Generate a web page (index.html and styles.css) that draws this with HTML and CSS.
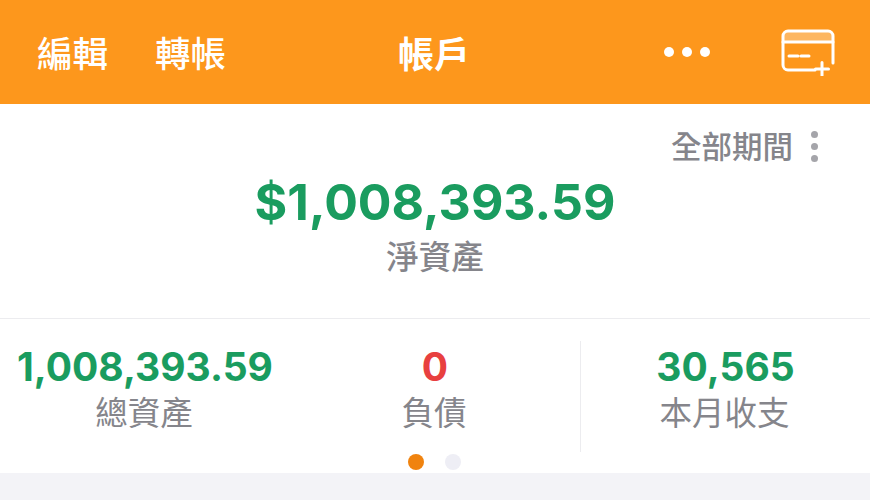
FILE: index.html
```html
<!DOCTYPE html>
<html lang="zh-Hant">
<head>
  <meta charset="UTF-8" />
  <title>帳戶</title>
  <link rel="stylesheet" href="styles.css">
</head>
<body>
  <header class="topbar">
    <div class="topbar-left">
      <span>編輯</span>
      <span>轉帳</span>
    </div>
    <div class="topbar-title">帳戶</div>
    <div class="topbar-right">
      <div class="more-dots"><i></i><i></i><i></i></div>
      <svg class="card-icon" width="54" height="48" viewBox="0 0 54 48" fill="none" stroke="#fff" stroke-width="3" stroke-linecap="round">
        <path d="M2 14V8a5 5 0 0 1 5-5h40a5 5 0 0 1 5 5v6z" fill="#fff" fill-opacity="0.3" stroke="none"/>
        <path d="M34 42H7a5 5 0 0 1-5-5V8a5 5 0 0 1 5-5h40a5 5 0 0 1 5 5v27"/>
        <path d="M2 14h50"/>
        <path d="M8 28h9M20 28h8"/>
        <path d="M41 34.500v13M34.500 41h13"/>
      </svg>
    </div>
  </header>

  <section class="summary">
    <div class="period">
      <span>全部期間</span>
      <div class="kebab"><i></i><i></i><i></i></div>
    </div>
    <div class="net-value">$1,008,393.59</div>
    <div class="net-label">淨資產</div>
  </section>

  <section class="stats">
    <div class="stat">
      <div class="stat-value green">1,008,393.59</div>
      <div class="stat-label">總資產</div>
    </div>
    <div class="stat">
      <div class="stat-value red">0</div>
      <div class="stat-label">負債</div>
    </div>
    <div class="stat stat-last">
      <div class="stat-value green">30,565</div>
      <div class="stat-label">本月收支</div>
    </div>
  </section>

  <div class="pager"><i class="on"></i><i></i></div>
  <div class="footer-band"></div>
</body>
</html>
```

FILE: styles.css
```css
:root {
  --orange: #fd971c;
  --green: #1a9c5f;
  --red: #e8403f;
  --grey: #85858b;
}

* {
  box-sizing: border-box;
}

html, body {
  height: 100%;
}

body {
  margin: 0;
  background: #fff;
  display: flex;
  flex-direction: column;
  overflow: hidden;
  font-family: "Noto Sans CJK TC", "Inter", sans-serif;
}

.topbar {
  height: 104px;
  flex: none;
  background: var(--orange);
  color: #fff;
  display: grid;
  grid-template-columns: 1fr auto 1fr;
  align-items: center;
  padding: 0 35px 0 37px;
  font-size: 35.500px;
  font-weight: 500;
  line-height: 1;
}

.topbar-left {
  display: flex;
  gap: 47px;
}

.topbar-title {
  font-size: 36px;
  font-weight: 700;
  margin-left: -4px;
}

.topbar-right {
  display: flex;
  justify-content: flex-end;
  align-items: center;
  gap: 71px;
}

.more-dots {
  display: flex;
  gap: 8px;
}

.more-dots i {
  width: 10px;
  height: 10px;
  border-radius: 50%;
  background: #fff;
}

.summary {
  height: 215px;
  flex: none;
  border-bottom: 1px solid #ececef;
  display: flex;
  flex-direction: column;
  align-items: center;
  padding-top: 22px;
}

.period {
  align-self: flex-end;
  display: flex;
  align-items: center;
  gap: 18px;
  padding-right: 52px;
  font-size: 30.500px;
  font-weight: 500;
  line-height: 38px;
  color: var(--grey);
}

.kebab {
  display: flex;
  flex-direction: column;
  gap: 5px;
  margin-top: 2px;
}

.kebab i {
  width: 7px;
  height: 7px;
  border-radius: 50%;
  background: #a5a5aa;
}

.net-value {
  font-family: "Inter", sans-serif;
  font-weight: 700;
  font-size: 50px;
  line-height: 60px;
  margin-top: 8px;
  color: var(--green);
}

.net-label {
  font-size: 32.500px;
  font-weight: 500;
  line-height: 46px;
  color: var(--grey);
}

.stats {
  height: 134px;
  flex: none;
  display: grid;
  grid-template-columns: 290px 290px 290px;
  padding-top: 22px;
}

.stat {
  height: 111px;
  text-align: center;
}

.stat-last {
  border-left: 1px solid #ececef;
}

.stat-value {
  font-family: "Inter", sans-serif;
  font-weight: 700;
  font-size: 39px;
  line-height: 52px;
}

.stat-label {
  font-size: 32.500px;
  line-height: 36px;
  padding-right: 2px;
  color: var(--grey);
}

.green {
  color: var(--green);
}

.red {
  color: var(--red);
}

.pager {
  height: 20px;
  flex: none;
  display: flex;
  justify-content: center;
  gap: 21px;
  padding-top: 1px;
  padding-right: 2px;
}

.pager i {
  width: 16px;
  height: 16px;
  border-radius: 50%;
  background: #eeeef5;
}

.pager i.on {
  background: #f0830f;
}

.footer-band {
  flex: 1;
  background: #f3f3f7;
}
```
